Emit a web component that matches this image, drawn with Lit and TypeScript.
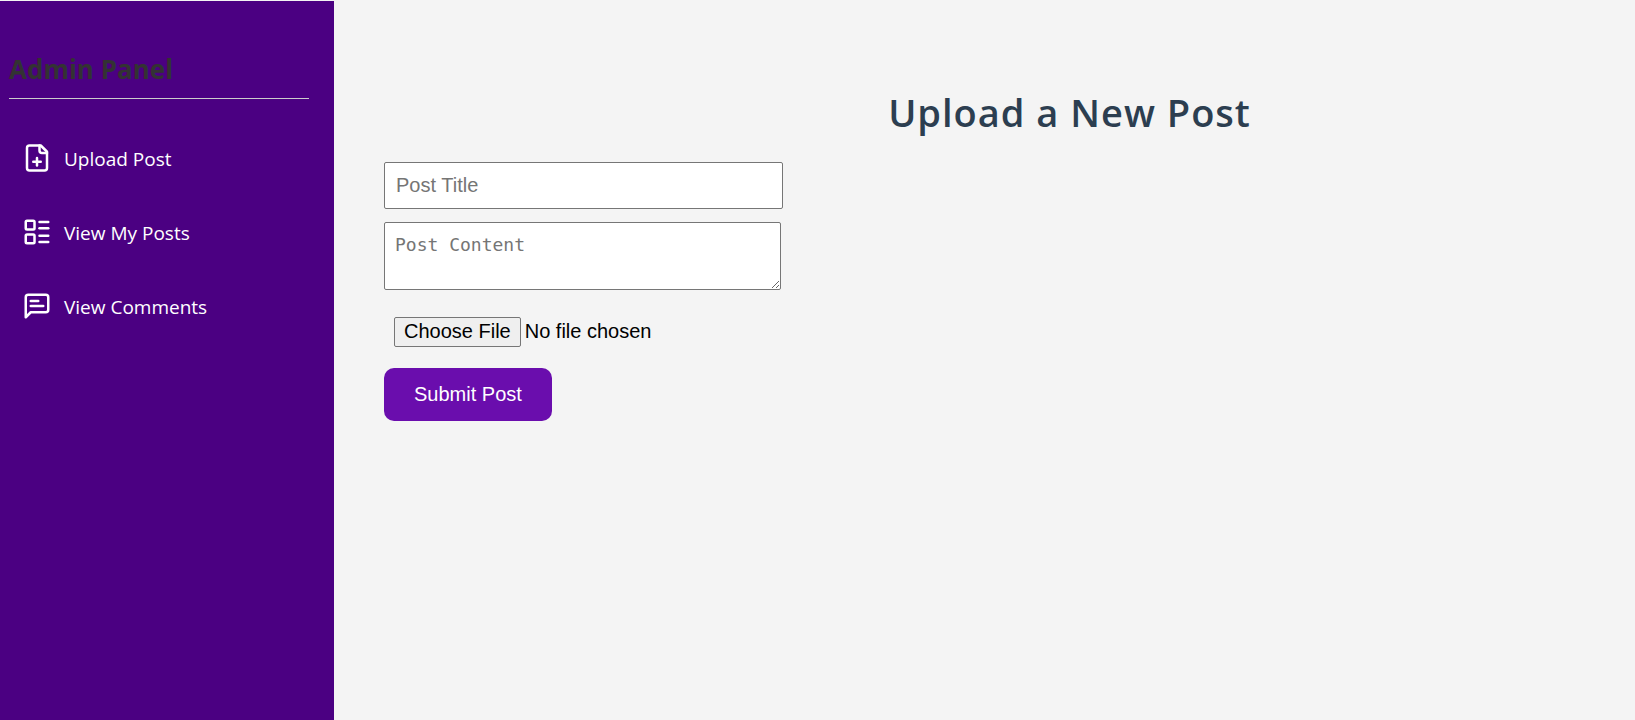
import { LitElement, html, css, svg } from "lit";
import { customElement } from "lit/decorators.js";

const uploadIcon = svg`
  <path d="M15 2H6a2 2 0 0 0-2 2v16a2 2 0 0 0 2 2h12a2 2 0 0 0 2-2V7Z" />
  <path d="M14 2v4a2 2 0 0 0 2 2h4" />
  <path d="M9 15h6" />
  <path d="M12 18v-6" />`;

const listIcon = svg`
  <rect x="3" y="3" width="7" height="7" rx="1" />
  <rect x="3" y="14" width="7" height="7" rx="1" />
  <path d="M14 4h7" />
  <path d="M14 9h7" />
  <path d="M14 15h7" />
  <path d="M14 20h7" />`;

const commentIcon = svg`
  <path d="M21 15a2 2 0 0 1-2 2H7l-4 4V5a2 2 0 0 1 2-2h14a2 2 0 0 1 2 2z" />
  <path d="M13 8H7" />
  <path d="M17 12H7" />`;

const links = [
  { label: "Upload Post", icon: uploadIcon },
  { label: "View My Posts", icon: listIcon },
  { label: "View Comments", icon: commentIcon },
];

@customElement("admin-sidebar")
class AdminSidebar extends LitElement {
  static styles = css`
    :host {
      display: block;
      box-sizing: border-box;
      padding: 48px 25px 24px 9px;
      background: #4b0082;
      font-family: "Open Sans", "Noto Sans", sans-serif;
    }
    .title {
      margin: 0 0 32px;
      padding-bottom: 9px;
      border-bottom: 1px solid #ccc;
      color: #333;
      font-size: 26px;
      line-height: 40px;
      font-weight: 700;
    }
    .list {
      margin: 0;
      padding: 0;
      list-style: none;
      display: flex;
      flex-direction: column;
      gap: 20px;
    }
    .link {
      display: flex;
      align-items: flex-start;
      gap: 12px;
      padding: 12px 13px;
      color: #fff;
      font-size: 19px;
      line-height: 32px;
      text-decoration: none;
    }
    .item {
      height: 54px;
    }
    .icon {
      flex: none;
      width: 30px;
      height: 30px;
      fill: none;
      stroke: currentColor;
      stroke-width: 2;
      stroke-linecap: round;
      stroke-linejoin: round;
    }
  `;

  render() {
    return html`
      <h2 class="title">Admin Panel</h2>
      <nav>
        <ul class="list">
          ${links.map(
            (link) => html`<li class="item">
              <a class="link" href="#">
                <svg class="icon" viewBox="0 0 24 24" aria-hidden="true">${link.icon}</svg>
                <span>${link.label}</span>
              </a>
            </li>`
          )}
        </ul>
      </nav>
    `;
  }
}

@customElement("post-form")
class PostForm extends LitElement {
  static styles = css`
    :host {
      display: block;
      font-family: "Liberation Sans", Arial, sans-serif;
    }
    .form {
      display: flex;
      flex-direction: column;
      align-items: flex-start;
    }
    .field {
      box-sizing: border-box;
      max-width: 100%;
      margin: 0 0 13px;
      padding: 10px 11px;
      border: 1px solid #767676;
      border-radius: 2px;
      background: #fff;
      color: #000;
      font-family: inherit;
      font-size: 20px;
      line-height: 25px;
    }
    .field::placeholder {
      color: #757575;
    }
    .name {
      width: 399px;
      height: 47px;
    }
    .content {
      width: 397px;
      height: 68px;
      padding: 10px;
      font-family: "DejaVu Sans Mono", monospace;
      font-size: 18px;
      line-height: 24px;
    }
    .file {
      max-width: 100%;
      margin: 4px 0 11px;
      padding: 10px;
      font-family: inherit;
      font-size: 20px;
      line-height: 24px;
      color: #000;
    }
    .file::file-selector-button {
      box-sizing: border-box;
      height: 30px;
      margin: 0 4px 0 0;
      padding: 0 9px 2px;
      border: 1px solid #767676;
      border-radius: 2px;
      background: #efefef;
      color: #000;
      font: inherit;
    }
    .submit {
      padding: 14px 30px;
      border: 0;
      border-radius: 10px;
      background: #6a0dad;
      color: #fff;
      font-family: inherit;
      font-size: 20px;
      line-height: 25px;
      cursor: pointer;
    }
  `;

  render() {
    return html`
      <form class="form" @submit=${(e: Event) => e.preventDefault()}>
        <input class="field name" type="text" placeholder="Post Title" aria-label="Post Title" />
        <textarea class="field content" placeholder="Post Content" aria-label="Post Content"></textarea>
        <input class="file" type="file" aria-label="Choose File" />
        <button class="submit" type="submit">Submit Post</button>
      </form>
    `;
  }
}

@customElement("app-root")
class AppRoot extends LitElement {
  static styles = css`
    :host {
      display: grid;
      grid-template-columns: 334px minmax(0, 1fr);
      box-sizing: border-box;
      min-height: 100vh;
      padding-top: 1px;
      background: #f4f4f4;
    }
    .main {
      padding: 81px 0 48px 50px;
    }
    .heading {
      margin: 0 0 20px;
      padding-left: 120px;
      text-align: center;
      color: #2c3e50;
      font-family: "Open Sans", "Noto Sans", sans-serif;
      font-size: 38px;
      line-height: 60px;
      font-weight: 600;
      letter-spacing: 1px;
    }
  `;

  render() {
    return html`
      <admin-sidebar></admin-sidebar>
      <main class="main">
        <h1 class="heading">Upload a New Post</h1>
        <post-form></post-form>
      </main>
    `;
  }
}
